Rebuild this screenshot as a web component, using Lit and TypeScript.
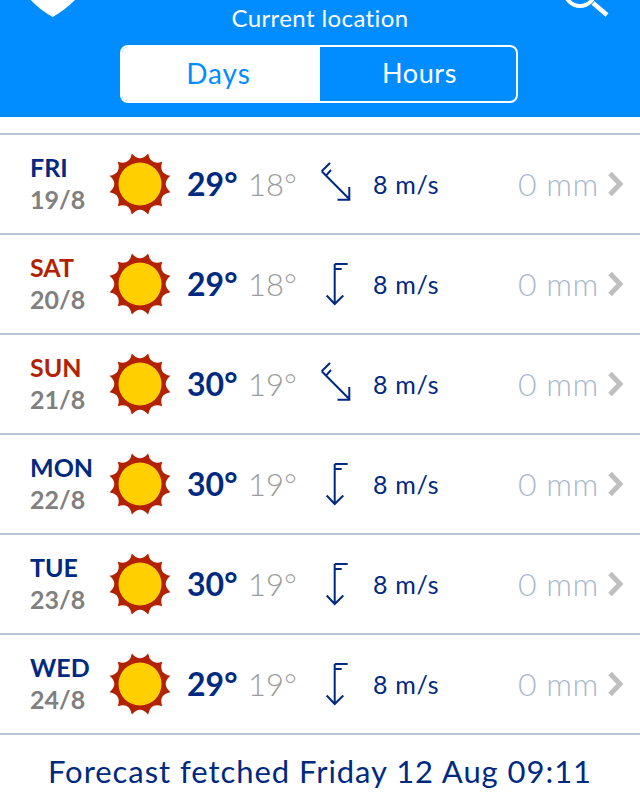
import { LitElement, html, css, svg } from 'lit'
import { customElement } from 'lit/decorators.js'

interface Day {
  name: string
  date: string
  hi: number
  lo: number
  wind: 'diag' | 'down'
  weekend?: boolean
}

const days: Day[] = [
  { name: 'FRI', date: '19/8', hi: 29, lo: 18, wind: 'diag' },
  { name: 'SAT', date: '20/8', hi: 29, lo: 18, wind: 'down', weekend: true },
  { name: 'SUN', date: '21/8', hi: 30, lo: 19, wind: 'diag', weekend: true },
  { name: 'MON', date: '22/8', hi: 30, lo: 19, wind: 'down' },
  { name: 'TUE', date: '23/8', hi: 30, lo: 19, wind: 'down' },
  { name: 'WED', date: '24/8', hi: 29, lo: 19, wind: 'down' },
]

// 12 pointed rays with concave sides between them
function sunPath() {
  const pt = (r: number, deg: number) => {
    const a = (deg * Math.PI) / 180
    return `${(32 + r * Math.cos(a)).toFixed(2)} ${(32 + r * Math.sin(a)).toFixed(2)}`
  }
  let d = `M${pt(31.5, 15)}`
  for (let i = 0; i < 12; i++) {
    const start = 15 + i * 30
    d += `Q${pt(21, start + 15)} ${pt(31.5, start + 30)}`
  }
  return d + 'Z'
}

const sun = html`<svg class="sun" width="64" height="64" viewBox="0 0 64 64">
  <path d=${sunPath()} fill="#b22200"></path>
  <circle cx="32" cy="32" r="21.5" fill="#ffcf00"></circle>
</svg>`

const arrows = {
  diag: svg`<path d="M1.7 13.3 L30 41.7 M29.3 29 V41.7 H17.5 M1.7 13.3 L10 5 M6 17.7 L11 12"/>`,
  down: svg`<path d="M14.7 6 V46 M14.7 6 H27.7 M14.7 11 H21.7 M6.7 37.5 L14.7 46 L23.3 37.5"/>`,
}

@customElement('app-root')
class App extends LitElement {
  static styles = css`
    :host {
      display: block;
      width: 640px;
      height: 795px;
      overflow: hidden;
      background: #fff;
      font-family: 'Lato', 'Open Sans', sans-serif;
    }
    .head {
      height: 117px;
      background: #018dff;
      color: #fff;
    }
    .top {
      display: grid;
      grid-template-columns: 1fr auto 1fr;
      height: 45px;
      align-items: start;
    }
    .shield {
      margin-left: 30px;
      display: block;
    }
    .search {
      margin-left: auto;
      margin-right: 29px;
      display: block;
    }
    .place {
      font-size: 24px;
      line-height: 28px;
      margin-top: 4px;
      letter-spacing: 0.4px;
    }
    .tabs {
      display: flex;
      width: 398px;
      height: 58px;
      margin: 0 0 0 120px;
      box-sizing: border-box;
      border: 2px solid #fff;
      border-radius: 8px;
      overflow: hidden;
      font-size: 27px;
      letter-spacing: 0.6px;
    }
    .tab {
      flex: 1;
      display: flex;
      align-items: center;
      justify-content: center;
      padding: 0 0 3px 3px;
    }
    .tab.on {
      flex: 0 0 198px;
      box-sizing: border-box;
      padding: 0 5px 3px 0;
      background: #fff;
      color: #018dff;
      font-size: 28px;
      letter-spacing: 0.9px;
    }
    .list {
      margin-top: 16px;
    }
    .row {
      display: grid;
      grid-template-columns: 79px 77px 62px 71px 53px 145px 90px 1fr;
      align-items: center;
      height: 100px;
      box-sizing: border-box;
      padding-left: 30px;
      border-top: 2px solid #b8c4d8;
      color: #002a7f;
    }
    .row:last-child {
      height: 102px;
      border-bottom: 2px solid #b8c4d8;
    }
    .day {
      font-size: 25px;
      font-weight: 700;
      line-height: 32px;
      margin-top: -3px;
    }
    .day.red .name {
      color: #b22200;
    }
    .date {
      color: #808080;
    }
    .sun {
      display: block;
      margin-left: -1px;
    }
    .hi {
      font-size: 32px;
      font-weight: 700;
      margin-top: -1px;
      margin-left: 1px;
    }
    .lo {
      font-size: 31px;
      font-weight: 300;
      color: #9c9c9c;
      margin-top: -1px;
    }
    .arrow {
      display: block;
      margin-left: 1px;
      fill: none;
      stroke: #002a7f;
      stroke-width: 2;
    }
    .wind {
      font-size: 25px;
      letter-spacing: 0.7px;
      margin-left: 1px;
    }
    .rain {
      font-size: 32px;
      font-weight: 300;
      color: #aab8d0;
      letter-spacing: 0.5px;
      white-space: nowrap;
      margin-top: -2px;
      margin-left: 1px;
    }
    .chev {
      display: block;
      margin-left: 1px;
      fill: none;
      stroke: #bfbfbf;
      stroke-width: 5;
    }
    .foot {
      text-align: center;
      font-size: 31px;
      line-height: 40px;
      margin-top: 16px;
      color: #002a7f;
      letter-spacing: 0.95px;
    }
  `

  renderRow(d: Day) {
    return html`<div class="row">
      <div class="day ${d.weekend ? 'red' : ''}">
        <div class="name">${d.name}</div>
        <div class="date">${d.date}</div>
      </div>
      ${sun}
      <div class="hi">${d.hi}°</div>
      <div class="lo">${d.lo}°</div>
      <svg class="arrow" width="36" height="52" viewBox="0 0 36 52">${arrows[d.wind]}</svg>
      <div class="wind">8 m/s</div>
      <div class="rain">0 mm</div>
      <svg class="chev" width="18" height="28" viewBox="0 0 18 28"><path d="M2 3.5 L12 14 L2 24.5"></path></svg>
    </div>`
  }

  render() {
    return html`
      <div class="head">
        <div class="top">
          <svg class="shield" width="48" height="18" viewBox="0 0 48 18">
            <path d="M0.7 0 H45 Q36 9 24 16.3 Q22.7 17.4 21.4 16.3 Q9 9 0.7 0 Z" fill="#fff"></path>
          </svg>
          <div class="place">Current location</div>
          <svg class="search" width="48" height="18" viewBox="0 0 48 18" fill="none" stroke="#fff" stroke-width="4">
            <circle cx="17" cy="-9" r="15"></circle>
            <path d="M30 3 L44 15" stroke-width="4.5"></path>
          </svg>
        </div>
        <div class="tabs">
          <div class="tab on">Days</div>
          <div class="tab">Hours</div>
        </div>
      </div>
      <div class="list">${days.map((d) => this.renderRow(d))}</div>
      <div class="foot">Forecast fetched Friday 12 Aug 09:11</div>
    `
  }
}
export default App
